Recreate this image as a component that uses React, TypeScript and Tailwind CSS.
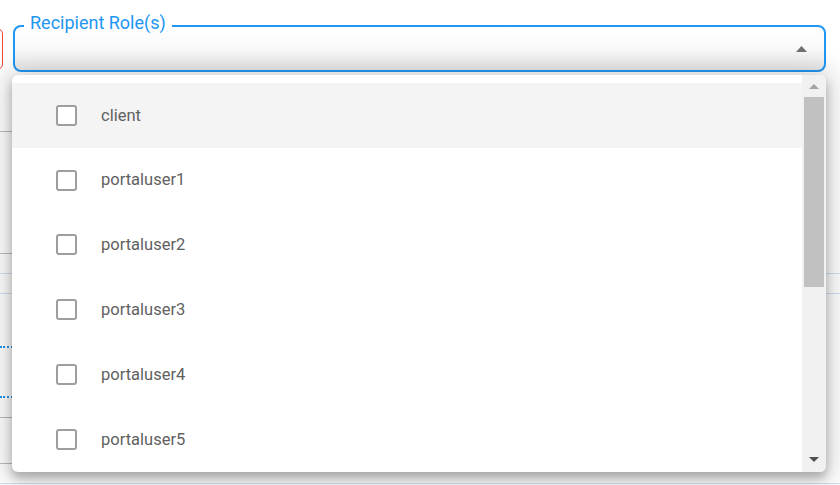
import React from 'react';

const roles = ['client', 'portaluser1', 'portaluser2', 'portaluser3', 'portaluser4', 'portaluser5'];

function Checkbox() {
  return <div className="w-[21px] h-[21px] shrink-0 rounded-[3px] border-2 border-[#9e9e9e] bg-white" />;
}

export default function App() {
  return (
    <div className="relative w-[840px] h-[485px] overflow-hidden bg-white font-['Roboto',sans-serif]">
      {/* page behind the menu */}
      <div className="flex items-start gap-[10px] pt-[12px]">
        <div className="mt-[16px] ml-[-40px] w-[43px] h-[42px] rounded-md border border-[#f44336]" />
        <fieldset className="w-[813px] h-[60px] rounded-lg border-2 border-[#2196f3] bg-gradient-to-b from-white via-[#f9f9f9] to-[#eaeaea] px-[9px]">
          <legend className="px-[6px] pb-[6px] text-[18px] leading-[22px] text-[#2196f3]">Recipient Role(s)</legend>
          <div className="flex h-[18px] items-center justify-end pr-[8px]">
            <svg width="11" height="6" viewBox="0 0 11 6">
              <path d="M0 6 L5.5 0 L11 6 Z" fill="#707070" />
            </svg>
          </div>
        </fieldset>
      </div>
      <div className="mt-[59px] w-[620px] border-t border-[#bdbdbd]" />
      <div className="mt-[121px] w-[620px] border-t border-[#bdbdbd]" />
      <div className="mt-[19px] border-t border-[#cfe3f5]" />
      <div className="mt-[19px] border-t border-[#cfe3f5]" />
      <div className="mt-[52px] w-[300px] border-t-2 border-dotted border-[#2196f3]" />
      <div className="mt-[48px] w-[300px] border-t-2 border-dotted border-[#2196f3]" />
      <div className="mt-[19px] w-[620px] border-t border-[#bdbdbd]" />
      <div className="mt-[45px] w-[620px] border-t border-[#bdbdbd]" />
      <div className="mt-[19px] border-t border-[#cfe3f5]" />

      {/* dropdown menu */}
      <div className="absolute left-[12px] top-[75px] flex w-[814px] h-[397px] overflow-hidden rounded-md bg-white shadow-[0_6px_10px_rgba(0,0,0,0.24),0_2px_24px_8px_rgba(0,0,0,0.16)]">
        <div className="flex-1 pt-[8px]">
          {roles.map((role, i) => (
            <div
              key={role}
              className={`flex h-[64.8px] items-center gap-[24px] pl-[44px] ${i === 0 ? 'bg-[#f4f4f4]' : ''}`}
            >
              <Checkbox />
              <span className="pt-[1px] text-[16.5px] text-[#616161]">{role}</span>
            </div>
          ))}
        </div>
        <div className="flex w-[24px] flex-col bg-[#f1f1f1]">
          <div className="flex h-[22px] items-center justify-center">
            <svg width="10" height="5" viewBox="0 0 10 5">
              <path d="M0 5 L5 0 L10 5 Z" fill="#a3a3a3" />
            </svg>
          </div>
          <div className="mx-[2px] h-[190px] bg-[#c1c1c1]" />
          <div className="flex-1" />
          <div className="flex h-[26px] items-center justify-center">
            <svg width="10" height="5" viewBox="0 0 10 5">
              <path d="M0 0 L10 0 L5 5 Z" fill="#505050" />
            </svg>
          </div>
        </div>
      </div>
    </div>
  );
}
